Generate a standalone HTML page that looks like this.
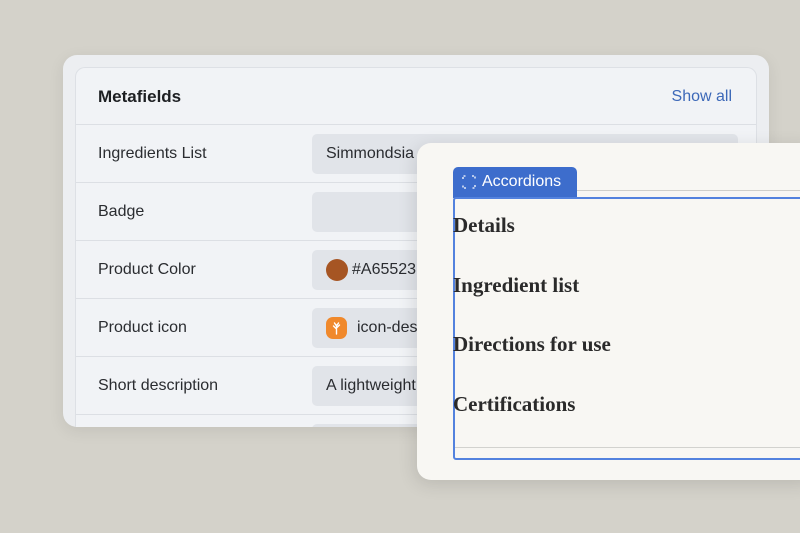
<!DOCTYPE html>
<html><head><style>
*{margin:0;padding:0;box-sizing:border-box}
body{width:800px;height:533px;overflow:hidden;background:#d4d2ca;position:relative;font-family:"Liberation Sans",sans-serif}
.outer{position:absolute;left:63px;top:55px;width:706px;height:372px;background:#eceef1;border-radius:14px;box-shadow:0 4px 16px rgba(0,0,0,.08)}
.inner{position:absolute;left:75px;top:67px;width:682px;height:360px;background:#f1f3f6;border:1px solid #dde0e5;border-bottom:none;border-radius:10px 10px 0 0;overflow:hidden}
.hdr{height:57px;border-bottom:1px solid #dcdfe4;position:relative}
.hdr b{position:absolute;left:22px;top:19px;font-size:17px;color:#1d1f22}
.hdr span{position:absolute;right:24px;top:20px;font-size:16px;color:#3c68b8}
.row{height:58px;border-bottom:1px solid #dcdfe4;position:relative}
.row .l{position:absolute;left:22px;top:20px;font-size:16px;color:#2a2c30}
.row .v{position:absolute;left:236px;top:9px;width:426px;height:40px;background:#e1e4e9;border-radius:5px;font-size:16px;color:#2a2c30;padding:11px 0 0 14px;white-space:nowrap}
.panel{position:absolute;left:417px;top:143px;width:400px;height:337px;background:#f8f7f3;border-radius:14px;box-shadow:-2px 4px 18px rgba(0,0,0,.12)}
.tab{position:absolute;left:453px;top:167px;width:124px;height:31px;background:#3d6dcc;border-radius:5px 5px 0 0;color:#fff;font-size:16px;padding:6px 0 0 29px}
.box{position:absolute;left:453px;top:197px;width:360px;height:263px;border:2px solid #5382de;border-radius:3px}
.serif{position:absolute;left:453px;font-family:"Liberation Serif",serif;font-weight:bold;font-size:21px;color:#2a2a2a}
</style></head><body>
<div class="outer"></div>
<div class="inner">
<div class="hdr"><b>Metafields</b><span>Show all</span></div>
<div class="row"><span class="l">Ingredients List</span><div class="v">Simmondsia</div></div>
<div class="row"><span class="l">Badge</span><div class="v"></div></div>
<div class="row"><span class="l">Product Color</span><div class="v" style="padding-left:40px"><span style="position:absolute;left:14px;top:9px;width:22px;height:22px;border-radius:50%;background:#a65523"></span>#A65523</div></div>
<div class="row"><span class="l">Product icon</span><div class="v" style="padding-left:45px"><span style="position:absolute;left:14px;top:9px;width:21px;height:22px;border-radius:7px;background:#f0892c"></span><svg style="position:absolute;left:18px;top:13px" width="13" height="14" viewBox="0 0 13 14"><path d="M6.5 13V4M6.5 8L3.5 5M6.5 7L9.5 4M6.5 5L4.5 2M6.5 5L8.5 2" stroke="#fff" stroke-width="1.4" fill="none" stroke-linecap="round"/></svg>icon-des</div></div>
<div class="row"><span class="l">Short description</span><div class="v">A lightweight</div></div>
<div class="row"><div class="v"></div></div>
</div>
<div class="panel"></div>
<div style="position:absolute;left:577px;top:190px;width:223px;height:1px;background:#cfcfcb"></div>
<div class="tab"><svg style="position:absolute;left:9px;top:8px" width="14" height="14" viewBox="0 0 14 14"><path d="M1 4V1H4M10 1H13V4M13 10V13H10M4 13H1V10" stroke="#fff" stroke-width="1.3" fill="none" stroke-dasharray="2 1.5"/></svg>Accordions</div>
<div class="box"></div>
<div style="position:absolute;left:455px;top:447px;width:345px;height:1px;background:#d2d2ce"></div>
<div class="serif" style="top:213px">Details</div>
<div class="serif" style="top:273px">Ingredient list</div>
<div class="serif" style="top:332px">Directions for use</div>
<div class="serif" style="top:392px">Certifications</div>
</body></html>
